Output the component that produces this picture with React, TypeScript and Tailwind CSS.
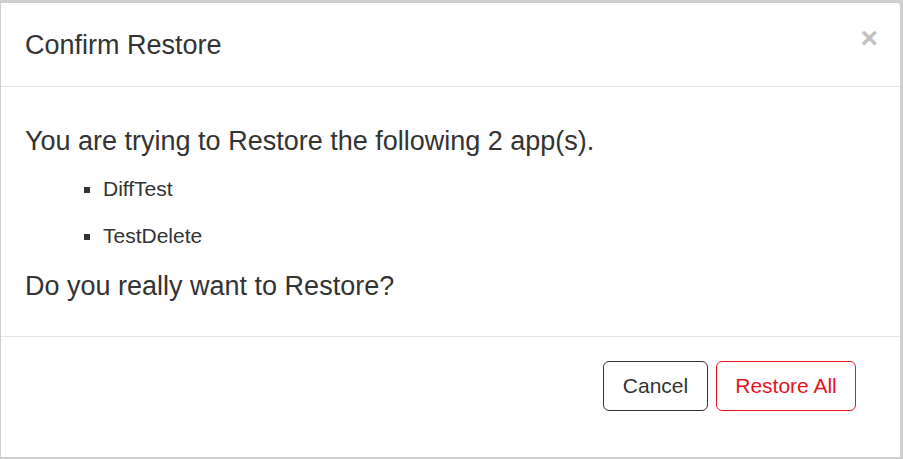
import React from "react";

export default function App() {
  return (
    <div className="w-[903px] h-[459px] bg-[#cfcfcf] pt-[3px] pl-[1px] pr-[3px] pb-[2px]" style={{ fontFamily: '"Liberation Sans", Arial, sans-serif' }}>
      <div className="w-full h-full bg-white rounded-tr-[4px] flex flex-col text-[#333]">
        <div className="h-[84px] flex items-center justify-between pl-[24px] pr-[22px] border-b border-[#e5e5e5] shrink-0">
          <div className="text-[27px] leading-none mt-[2px]">Confirm Restore</div>
          <div className="text-[#c2c2c2] text-[30px] font-bold leading-none -mt-[14px]">×</div>
        </div>
        <div className="h-[250px] border-b border-[#e5e5e5] px-[24px] pt-[39px] shrink-0">
          <div className="text-[27px] leading-[30px]">You are trying to Restore the following 2 app(s).</div>
          <ul className="list-[square] pl-[78px] text-[21px] mt-[21px]">
            <li className="leading-[24px] mb-[23px]">DiffTest</li>
            <li className="leading-[24px] mb-[23px]">TestDelete</li>
          </ul>
          <div className="text-[27px] leading-[30px]">Do you really want to Restore?</div>
        </div>
        <div className="flex-1 flex justify-end items-start pt-[24px] pr-[44px] gap-[8px]">
          <button className="h-[50px] w-[105px] border border-[#333] rounded-[6px] text-[21px] text-[#333]">Cancel</button>
          <button className="h-[50px] w-[140px] border border-[#e8141c] rounded-[6px] text-[21px] text-[#e8141c]">Restore All</button>
        </div>
      </div>
    </div>
  );
}
